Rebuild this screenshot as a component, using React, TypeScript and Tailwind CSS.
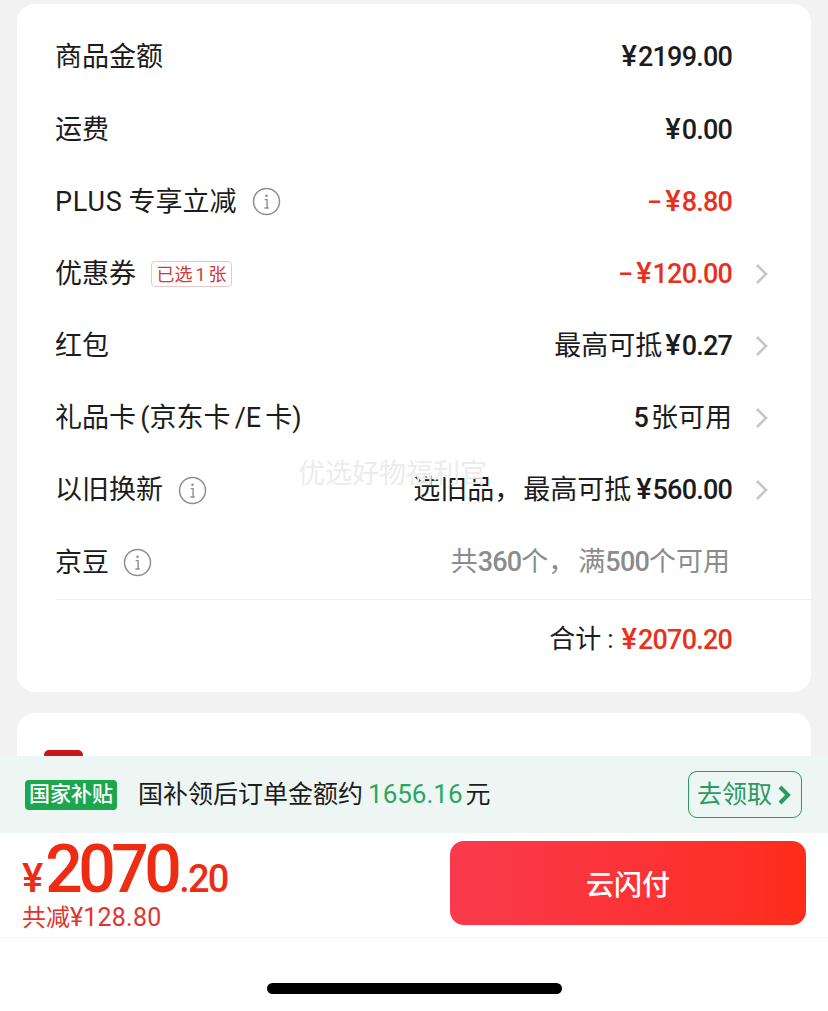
import { ReactNode } from "react";

const InfoIcon = ({ gap = "ml-[15px]" }: { gap?: string }) => (
  <svg width="29" height="29" viewBox="0 0 29 29" fill="none" className={gap + " shrink-0"}>
    <circle cx="14.5" cy="14.5" r="13" stroke="#8f8f8f" strokeWidth="1.5" />
    <circle cx="14.5" cy="8.8" r="1.3" fill="#8f8f8f" />
    <path d="M12.6 12.6h2.5v8.2M12.4 21h4.4" stroke="#8f8f8f" strokeWidth="1.4" />
  </svg>
);

const Chevron = () => (
  <svg width="13" height="22" viewBox="0 0 13 22" fill="none" className="ml-[23px]">
    <path d="M2 2l9 9-9 9" stroke="#c6c6c6" strokeWidth="2.6" />
  </svg>
);

// digits are medium and a bit narrower than the CJK text around them
const Num = ({ children }: { children: ReactNode }) => (
  <span className="text-[27px] font-medium tracking-[-0.8px]">{children}</span>
);

const Yen = ({ gap = "" }: { gap?: string }) => (
  <span className={gap + " mr-[1px] text-[29px] font-medium"}>¥</span>
);

const Minus = () => <span className="mr-[3px] text-[27px] font-medium">−</span>;

const Row = ({
  label,
  value,
  arrow,
  valueClass,
}: {
  label: ReactNode;
  value: ReactNode;
  arrow?: boolean;
  valueClass?: string;
}) => (
  <div className="flex h-[72.2px] items-center pl-[38px]">
    <div className="flex items-center pt-px text-[27px] text-[#1c1c1c]">{label}</div>
    <div className="grow" />
    <div className={"flex items-baseline text-[27px] whitespace-nowrap " + (valueClass || "text-[#1c1c1c]")}>
      {value}
    </div>
    <div className="flex w-[79px] shrink-0 items-center">{arrow && <Chevron />}</div>
  </div>
);

export default function App() {
  return (
    <div className="relative h-[1011px] w-[828px] overflow-hidden bg-[#f2f2f2] font-[Roboto,'Noto_Sans_CJK_SC',sans-serif]">
      <div className="mx-[17px] mt-1 rounded-[18px] bg-white pt-[17px] pb-3">
        <Row
          label="商品金额"
          value={
            <>
              <Yen />
              <Num>2199.00</Num>
            </>
          }
        />
        <Row
          label="运费"
          value={
            <>
              <Yen />
              <Num>0.00</Num>
            </>
          }
        />
        <Row
          label={
            <>
              <span className="tracking-[0.8px]">PLUS</span>
              <span className="ml-[6px]">专享立减</span>
              <InfoIcon />
            </>
          }
          value={
            <>
              <Minus />
              <Yen />
              <Num>8.80</Num>
            </>
          }
          valueClass="text-[#e9301c]"
        />
        <Row
          label={
            <>
              优惠券
              <span className="ml-[15px] flex h-[26px] w-[81px] items-center justify-center rounded-[4px] border border-[#efc4c4] text-[18px] text-[#cf3a3a] [word-spacing:-1.5px]">
                已选 1 张
              </span>
            </>
          }
          value={
            <>
              <Minus />
              <Yen />
              <Num>120.00</Num>
            </>
          }
          valueClass="text-[#e9301c]"
          arrow
        />
        <Row
          label="红包"
          value={
            <>
              最高可抵
              <Yen gap="ml-[3px]" />
              <Num>0.27</Num>
            </>
          }
          arrow
        />
        <Row
          label={<span className="[word-spacing:-2.5px]">礼品卡 (京东卡 /E 卡)</span>}
          value={
            <span className="flex items-baseline">
              <Num>5</Num>
              <span className="ml-[3px]">张可用</span>
            </span>
          }
          arrow
        />
        <Row
          label={
            <>
              以旧换新
              <InfoIcon />
            </>
          }
          value={
            <>
              选旧品，
              <span className="ml-[2px]">最高可抵</span>
              <Yen gap="ml-[5px]" />
              <Num>560.00</Num>
            </>
          }
          arrow
        />
        <Row
          label={
            <>
              京豆
              <InfoIcon gap="ml-[14px]" />
            </>
          }
          value={
            <span className="mr-[2px] flex items-baseline">
              共<Num>360</Num>个，
              <span className="ml-[3px]">满</span>
              <Num>500</Num>个可用
            </span>
          }
          valueClass="text-[#8c8c8c]"
        />
        <div className="ml-[39px] flex h-[81px] items-center justify-end border-t border-[#f0f0f0] pr-[79px] text-[26px]">
          <span className="text-[#1c1c1c]">合计</span>
          <span className="mr-[8px] ml-[6px] text-[#1c1c1c]">:</span>
          <span className="flex items-baseline text-[#e9301c]">
            <Yen />
            <Num>2070.20</Num>
          </span>
        </div>
      </div>

      <div className="mx-[17px] mt-[21px] h-[200px] rounded-[18px] bg-white pt-[37px] pl-[27px]">
        <div className="h-10 w-[39px] rounded-[5px] bg-[#c9161d]" />
      </div>

      {/* watermark */}
      <div className="absolute top-[454px] left-[298px] text-[27px] text-[#ececec]">优选好物福利官</div>

      {/* bottom bar */}
      <div className="absolute inset-x-0 bottom-0 h-[255px] bg-white">
        <div className="flex h-[77px] items-center bg-[#eef6f3] pr-[26px] pl-[25px]">
          <span className="flex h-[30px] w-[92px] items-center justify-center rounded-[4px] bg-[#1ba64f] text-[21px] font-medium text-white">
            国家补贴
          </span>
          <span className="ml-[21px] text-[25px] text-[#1c1c1c]">国补领后订单金额约</span>
          <span className="ml-[5px] text-[26px] text-[#2aa763]">1656.16</span>
          <span className="ml-[3px] text-[25px] text-[#1c1c1c]">元</span>
          <div className="grow" />
          <div className="flex h-[47px] w-[114px] items-center rounded-[9px] border-[1.5px] border-[#2a9a5e] pl-2 text-[25px] text-[#2a9a5e]">
            去领取
            <svg width="14" height="22" viewBox="0 0 14 22" fill="none" className="ml-[5px]">
              <path d="M3 3l8 8-8 8" stroke="#2a9a5e" strokeWidth="4" />
            </svg>
          </div>
        </div>
        <div className="flex h-[105px] border-b border-[#f5f5f5] pr-[22px] pl-[22px]">
          <div className="flex flex-col">
            <div className="flex items-baseline pt-[3.5px] leading-none font-medium text-[#ee2c14]">
              <span className="text-[40px]">¥</span>
              <span className="ml-[2px] text-[66px] tracking-[-4.5px]">2070</span>
              <span className="ml-[2px] text-[38px] tracking-[-1.8px]">.20</span>
            </div>
            <div className="mt-px flex items-baseline text-[24px] leading-[28px] text-[#e2332f]">
              共减<span className="text-[25px] tracking-[0.2px]">¥128.80</span>
            </div>
          </div>
          <div className="grow" />
          <div className="mt-2 flex h-[84px] w-[356px] items-center justify-center rounded-[14px] bg-gradient-to-r from-[#f93a4c] to-[#fe2c18] pt-[5px] text-[28px] font-medium text-white">
            云闪付
          </div>
        </div>
        <div className="flex justify-center pt-[45px]">
          <div className="h-[11px] w-[295px] rounded-full bg-black" />
        </div>
      </div>
    </div>
  );
}
